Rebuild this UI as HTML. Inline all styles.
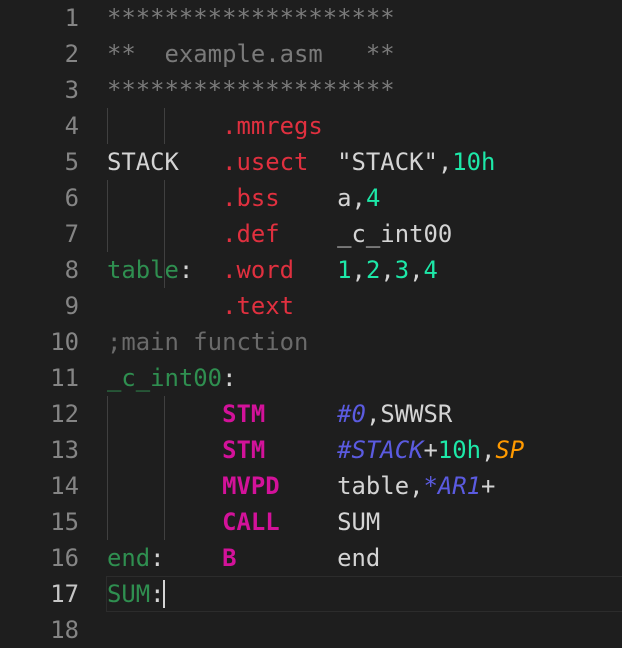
<!DOCTYPE html>
<html><head><style>
body{margin:0;width:622px;height:647px;background:#1e1e1e;overflow:hidden;font-family:"DejaVu Sans Mono","Liberation Mono",monospace;font-size:23.9px;}
.l{position:absolute;left:0;height:36px;line-height:36px;width:622px;white-space:pre;}
.n{position:absolute;right:543px;color:#858585;}
.c{position:absolute;left:107px;color:#d4d4d4;}
.cm{color:#7a7a7a}.d{color:#e0303f}.lb{color:#2f8f50}.m{color:#d3129a;font-weight:bold}.nu{color:#1de8a8}.b{color:#5b5be0;font-style:italic}.o{color:#ff9a00;font-style:italic}
.g{position:absolute;width:1px;background:#404040}
.cur{position:absolute;left:106px;top:576px;width:520px;height:34px;border:1px solid #2c2c2c;}
.caret{position:absolute;left:163px;top:580px;width:2px;height:28px;background:#d4d4d4}
</style></head><body>
<div class="g" style="left:107px;top:108px;height:36px"></div><div class="g" style="left:164px;top:108px;height:36px"></div>
<div class="g" style="left:107px;top:180px;height:72px"></div><div class="g" style="left:164px;top:180px;height:108px"></div>
<div class="g" style="left:107px;top:396px;height:144px"></div><div class="g" style="left:164px;top:396px;height:144px"></div>
<div class="cur"></div>
<div class="l" style="top:0"><span class="n">1</span><span class="c cm">********************</span></div>
<div class="l" style="top:36px"><span class="n">2</span><span class="c cm">**  example.asm   **</span></div>
<div class="l" style="top:72px"><span class="n">3</span><span class="c cm">********************</span></div>
<div class="l" style="top:108px"><span class="n">4</span><span class="c">        <span class="d">.mmregs</span></span></div>
<div class="l" style="top:144px"><span class="n">5</span><span class="c">STACK   <span class="d">.usect</span>  "STACK",<span class="nu">10h</span></span></div>
<div class="l" style="top:180px"><span class="n">6</span><span class="c">        <span class="d">.bss</span>    a,<span class="nu">4</span></span></div>
<div class="l" style="top:216px"><span class="n">7</span><span class="c">        <span class="d">.def</span>    _c_int00</span></div>
<div class="l" style="top:252px"><span class="n">8</span><span class="c"><span class="lb">table</span>:  <span class="d">.word</span>   <span class="nu">1</span>,<span class="nu">2</span>,<span class="nu">3</span>,<span class="nu">4</span></span></div>
<div class="l" style="top:288px"><span class="n">9</span><span class="c">        <span class="d">.text</span></span></div>
<div class="l" style="top:324px"><span class="n">10</span><span class="c cm" style="color:#6a6a6a">;main function</span></div>
<div class="l" style="top:360px"><span class="n">11</span><span class="c"><span class="lb">_c_int00</span>:</span></div>
<div class="l" style="top:396px"><span class="n">12</span><span class="c">        <span class="m">STM</span>     <span class="b">#0</span>,SWWSR</span></div>
<div class="l" style="top:432px"><span class="n">13</span><span class="c">        <span class="m">STM</span>     <span class="b">#STACK</span>+<span class="nu">10h</span>,<span class="o">SP</span></span></div>
<div class="l" style="top:468px"><span class="n">14</span><span class="c">        <span class="m">MVPD</span>    table,<span class="b">*AR1</span>+</span></div>
<div class="l" style="top:504px"><span class="n">15</span><span class="c">        <span class="m">CALL</span>    SUM</span></div>
<div class="l" style="top:540px"><span class="n">16</span><span class="c"><span class="lb">end</span>:    <span class="m">B</span>       end</span></div>
<div class="l" style="top:576px"><span class="n" style="color:#c6c6c6">17</span><span class="c"><span class="lb">SUM</span>:</span></div>
<div class="l" style="top:612px"><span class="n">18</span></div>
<div class="caret"></div>
</body></html>
